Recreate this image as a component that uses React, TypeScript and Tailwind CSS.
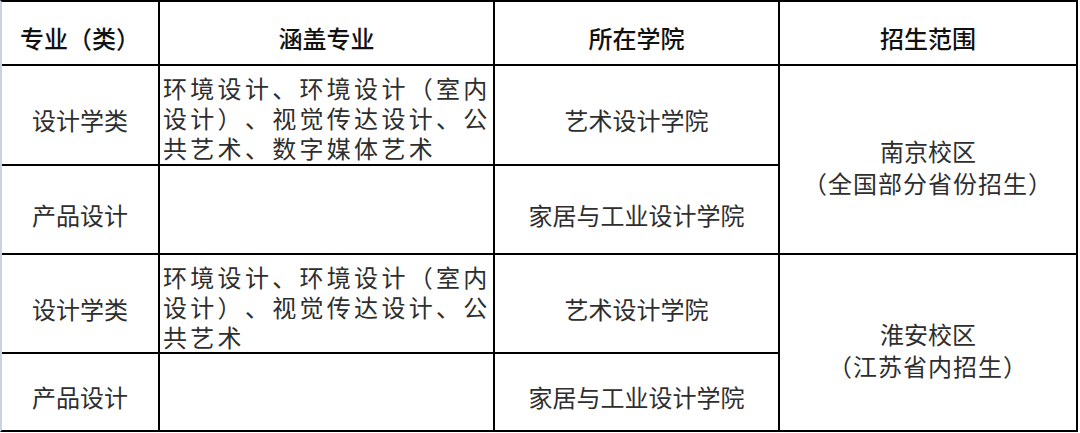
const font = { fontFamily: '"Noto Sans CJK SC", "Noto Sans", sans-serif' };

type Row = {
  major: string;
  covers?: string;
  college: string;
};

const headers = ["专业（类）", "涵盖专业", "所在学院", "招生范围"];

const groups: { rows: Row[]; campus: string; scope: string }[] = [
  {
    rows: [
      { major: "设计学类", covers: "环境设计、环境设计（室内设计）、视觉传达设计、公共艺术、数字媒体艺术", college: "艺术设计学院" },
      { major: "产品设计", college: "家居与工业设计学院" },
    ],
    campus: "南京校区",
    scope: "（全国部分省份招生）",
  },
  {
    rows: [
      { major: "设计学类", covers: "环境设计、环境设计（室内设计）、视觉传达设计、公共艺术", college: "艺术设计学院" },
      { major: "产品设计", college: "家居与工业设计学院" },
    ],
    campus: "淮安校区",
    scope: "（江苏省内招生）",
  },
];

export default function App() {
  return (
    <div className="w-[1080px] h-[433px] bg-white [text-spacing-trim:space-all]" style={font}>
      <div className="w-[1078px] border-l-2 border-l-[#c9d1e2] border-t-2 border-r-2 border-b-2 border-black bg-black">
        <div className="grid grid-cols-[156px_333px_283px_296px] grid-rows-[62px_98px_87px_97px_76px] gap-[2px]">
          {headers.map((h) => (
            <div key={h} className="bg-white flex items-center justify-center pt-[10px] text-[24px] font-medium text-[#111]">
              {h}
            </div>
          ))}
          {groups.map((g, gi) =>
            g.rows.map((r, ri) => (
              <>
                <div
                  key={`m-${gi}-${ri}`}
                  className="bg-white flex items-center justify-center pt-[10px] text-[24px] text-[#2e2e2e]"
                >
                  {r.major}
                </div>
                <div
                  key={`c-${gi}-${ri}`}
                  className="bg-white pl-[3px] pt-[7px] text-[24px] leading-[30px] tracking-[3.3px] text-[#2e2e2e]"
                >
                  {r.covers}
                </div>
                <div
                  key={`s-${gi}-${ri}`}
                  className="bg-white flex items-center justify-center pt-[10px] text-[24px] text-[#2e2e2e]"
                >
                  {r.college}
                </div>
                {ri === 0 && (
                  <div
                    key={`p-${gi}`}
                    className="row-span-2 bg-white flex flex-col items-center justify-center pt-[14px] text-[24px] leading-[32px] text-[#2e2e2e]"
                  >
                    <span>{g.campus}</span>
                    <span className="tracking-[1px]">{g.scope}</span>
                  </div>
                )}
              </>
            ))
          )}
        </div>
      </div>
    </div>
  );
}
